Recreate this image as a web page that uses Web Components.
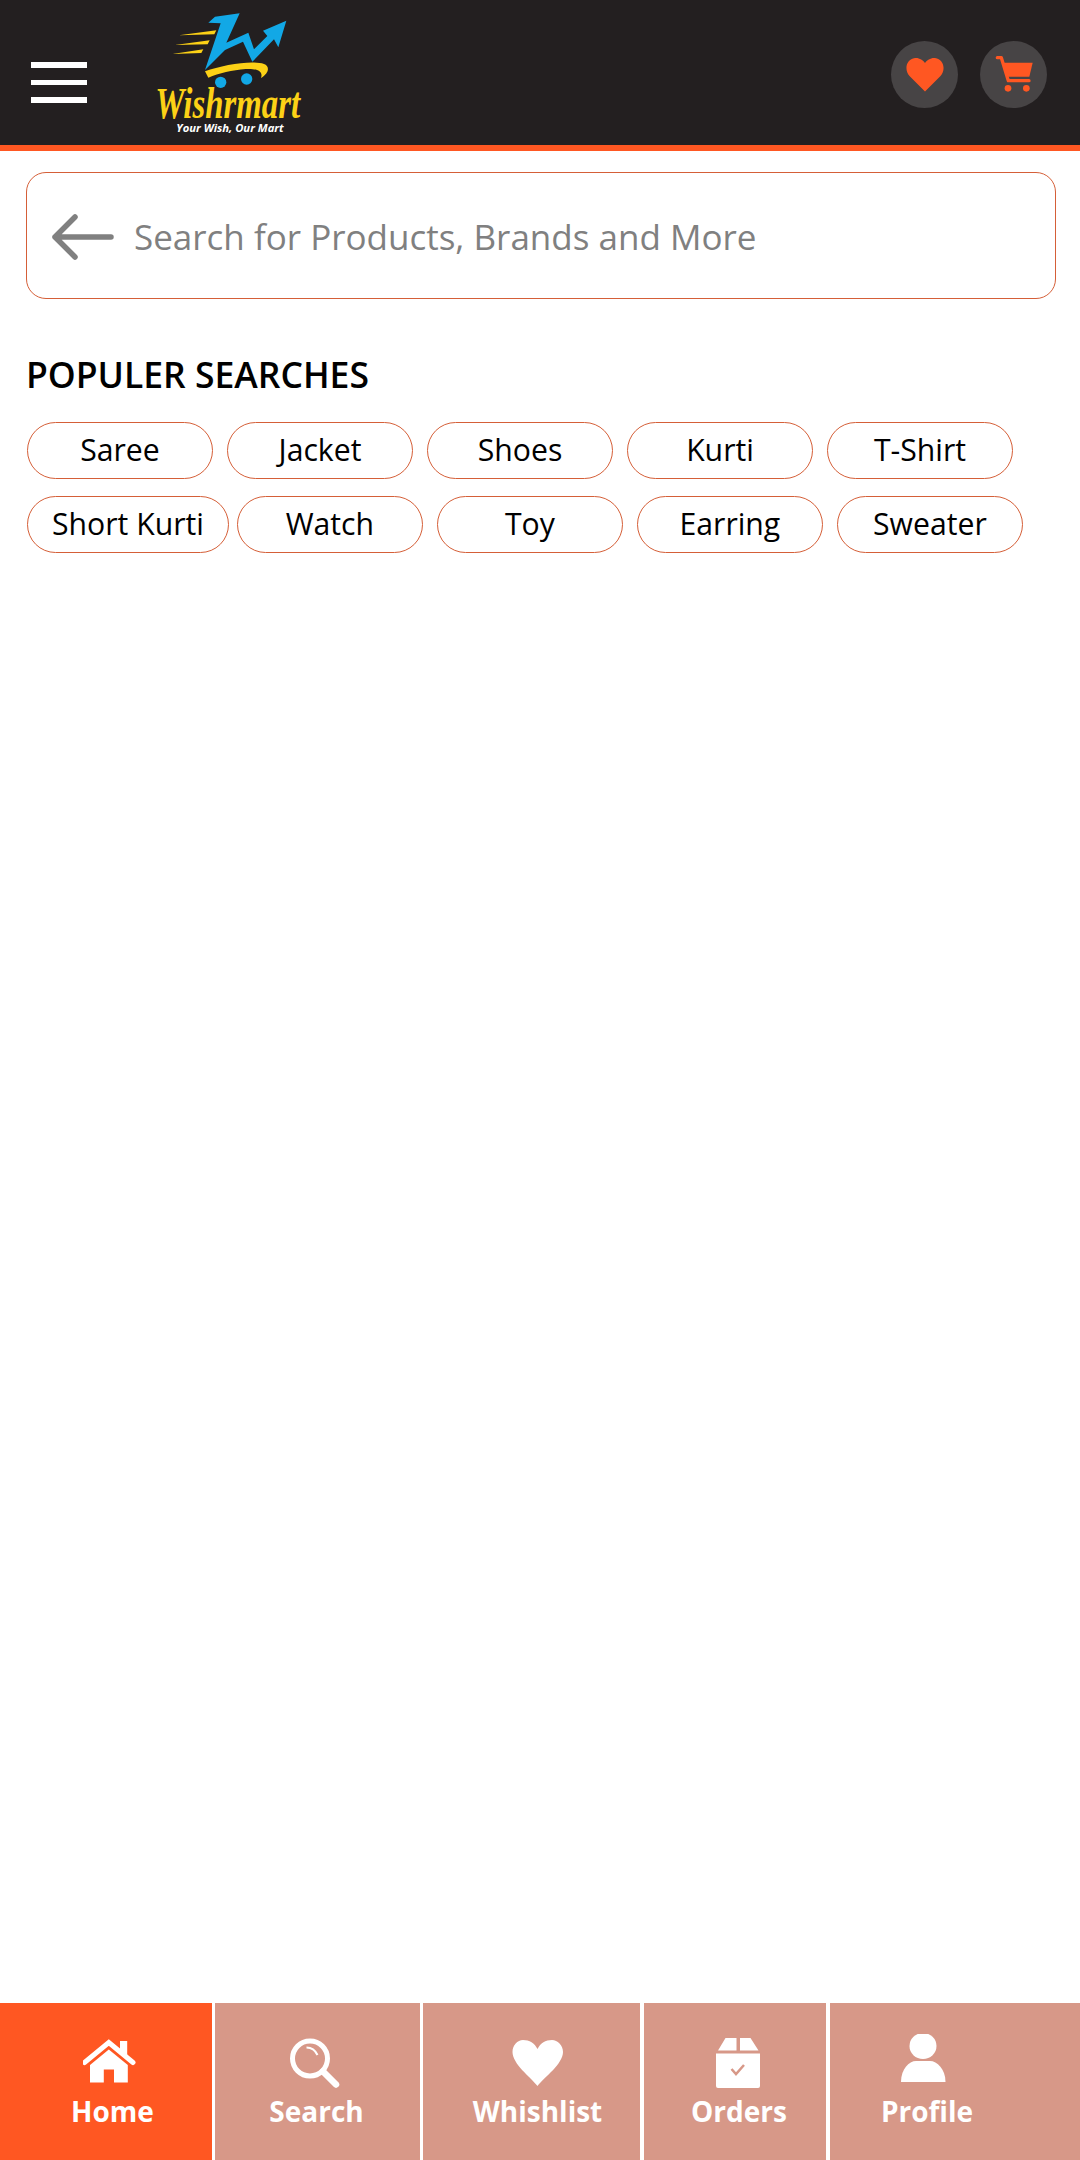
<!DOCTYPE html>
<html lang="en"><head><meta charset="utf-8"><title>Wishrmart</title>
<style>
html,body{margin:0;padding:0;background:#fff}
body{width:1080px;height:2160px;font-family:"Open Sans",sans-serif;display:flex;flex-direction:column;overflow:hidden}
</style></head><body>
<app-header></app-header>
<search-box placeholder="Search for Products, Brands and More"></search-box>
<popular-searches heading="POPULER SEARCHES">
  <search-chip>Saree</search-chip><search-chip>Jacket</search-chip><search-chip>Shoes</search-chip><search-chip>Kurti</search-chip><search-chip>T-Shirt</search-chip>
  <search-chip tight>Short Kurti</search-chip><search-chip>Watch</search-chip><search-chip>Toy</search-chip><search-chip>Earring</search-chip><search-chip>Sweater</search-chip>
</popular-searches>
<bottom-nav>
  <nav-item active label="Home" w="212" pad="42.5"><svg xmlns="http://www.w3.org/2000/svg" slot="icon" viewBox="82.5 2034 60 56" width="60" height="56"><path d="M84 2062.500L108.300 2042.500L132.500 2062.500" fill="none" stroke="#fff" stroke-width="5" stroke-linecap="round"/><path d="M119.500 2041H126.700V2057L119.500 2051Z" fill="#fff"/><path d="M89.500 2065L108.300 2049.500L127.300 2065V2082.500H113.500V2069.500H103.300V2082.500H89.500Z" fill="#fff"/></svg></nav-item>
  <nav-item label="Search" w="205" pad="31.5"><svg xmlns="http://www.w3.org/2000/svg" slot="icon" viewBox="286.5 2034 60 56" width="60" height="56"><circle cx="309.500" cy="2058.500" r="17.500" fill="none" stroke="#fff" stroke-width="5"/><path d="M322.500 2071.500L335.500 2084.500" stroke="#fff" stroke-width="6.500" stroke-linecap="round"/><path d="M306 2047.500Q313.500 2047.500 317 2055" fill="none" stroke="#fff" stroke-width="2"/></svg></nav-item>
  <nav-item label="Whishlist" w="217" pad="44.5"><svg xmlns="http://www.w3.org/2000/svg" slot="icon" viewBox="507.5 2034 60 56" width="60" height="56"><path d="M537 2086C530 2077 512 2064 512 2052C512 2045 517 2040 522.500 2040C529 2040 534 2043 537 2049C540 2043 545 2040 551.500 2040C557 2040 562.500 2045 562.500 2052C562.500 2064 544 2077 537 2086Z" fill="#fff"/></svg></nav-item>
  <nav-item label="Orders" w="182" pad="25" wide><svg xmlns="http://www.w3.org/2000/svg" slot="icon" viewBox="709 2034 60 56" width="60" height="56"><path d="M718 2050.500L725.500 2038H736.500V2050.500ZM740 2038H750.500L758.500 2050.500H740ZM716 2053.500H760V2086Q760 2088 758 2088H718Q716 2088 716 2086Z" fill="#fff"/><path d="M731.500 2069L736 2074L744 2065" fill="none" stroke="#d79888" stroke-width="2.500"/></svg></nav-item>
  <nav-item label="Profile" w="250" pad="27" wide><svg xmlns="http://www.w3.org/2000/svg" slot="icon" viewBox="897 2034 60 56" width="60" height="56"><ellipse cx="923" cy="2046" rx="13.500" ry="13"/><path d="M901 2082C901 2069 909 2061 916 2061H930C937 2061 945.500 2069 945.500 2082Z"/></svg></nav-item>
</bottom-nav>
<script>
const mk=(name,cls)=>customElements.define(name,cls);
const shadow=(el,html)=>{el.attachShadow({mode:'open'}).innerHTML=html};
mk('app-logo',class extends HTMLElement{connectedCallback(){shadow(this,`<style>:host{display:block;width:180px;height:145px;flex:none}svg{display:block}</style>
<svg viewBox="0 0 540 435" width="180" height="145" xmlns="http://www.w3.org/2000/svg">
<path d="M208 68L228 50L302 40L262 128L328 98L345 148L385 108L372 92L442 62L418 142L405 118L340 185L312 125L258 150L198 210L245 70Z" fill="#12a8e6"/>
<path d="M198 214C250 195 340 180 375 192C392 198 392 218 366 234C374 212 350 205 320 207C280 210 240 220 208 233Z" fill="#fcd116"/>
<circle cx="245" cy="247" r="17" fill="#12a8e6"/><circle cx="323" cy="237" r="17" fill="#12a8e6"/>
<path d="M120 106L232 91L226 103ZM108 135L212 121L206 133ZM100 162L193 148L187 159Z" fill="#fcd116"/>
<text transform="translate(49 353) scale(.725 1)" font-family="'Liberation Serif',serif" font-weight="700" font-style="italic" font-size="136" fill="#fcd116">Wishrmart</text>
<text x="112" y="397" font-family="'Open Sans',sans-serif" font-weight="700" font-style="italic" font-size="29" fill="#fff" textLength="322" lengthAdjust="spacingAndGlyphs">Your Wish, Our Mart</text>
</svg>`)}});
mk('round-button',class extends HTMLElement{connectedCallback(){shadow(this,`<style>:host{display:flex;width:67px;height:67px;border-radius:50%;background:#474445;align-items:center;justify-content:center;flex:none}</style><slot></slot>`)}});
mk('app-header',class extends HTMLElement{connectedCallback(){shadow(this,`<style>
:host{display:flex;align-items:center;height:145px;background:#231f20;border-bottom:6px solid #ff5722;flex:none;padding:0 33px 0 31px}
.menu{display:flex;flex-direction:column;gap:12px;width:56px;margin-right:52px;align-self:flex-start;margin-top:62px}
.menu i{display:block;height:5.500px;background:#fff}
.sp{flex:1}
.acts{display:flex;gap:22px;margin-top:3px}
svg{display:block}
</style>
<div class="menu"><i></i><i></i><i></i></div>
<app-logo></app-logo><div class="sp"></div>
<div class="acts">
<round-button><svg xmlns="http://www.w3.org/2000/svg" width="38" height="35" viewBox="0 0 38 35"><path d="M19 34.500L3.500 19C-2 13 0 2 9 1C13 .5 17 3 19 6C21 3 25 .5 29 1C38 2 40 13 34.500 19Z" fill="#ff5722"/></svg></round-button>
<round-button><svg xmlns="http://www.w3.org/2000/svg" width="40" height="40" viewBox="460 165 120 120"><path d="M470 176H482L503 245H565" fill="none" stroke="#ff5722" stroke-width="10" stroke-linecap="round" stroke-linejoin="round"/><path d="M484 191H576L566 233H497Z" fill="#ff5722"/><circle cx="502" cy="268" r="10" fill="#ff5722"/><circle cx="557" cy="268" r="10" fill="#ff5722"/></svg></round-button>
</div>`)}});
mk('search-box',class extends HTMLElement{connectedCallback(){shadow(this,`<style>
:host{display:block;flex:none;padding:21px 24px 0 26px}
.box{display:flex;align-items:center;height:127px;box-sizing:border-box;border:1px solid #d55f38;border-radius:20px;padding:2px 0 0 24px;gap:20px}
svg{display:block;flex:none}
span{font-size:35px;color:#808080;font-family:"Open Sans",sans-serif;white-space:nowrap}
</style><div class="box"><svg xmlns="http://www.w3.org/2000/svg" width="63" height="46" viewBox="0 0 63 46"><path d="M60 23H4M24 3L4 23L24 43" fill="none" stroke="#808080" stroke-width="5.500" stroke-linecap="round" stroke-linejoin="round"/></svg><span>${this.getAttribute('placeholder')}</span></div>`)}});
mk('popular-searches',class extends HTMLElement{connectedCallback(){shadow(this,`<style>
:host{display:block;flex:1;padding:53px 0 0 27px}
h2{margin:0 0 25px -1px;font:550 35.500px/45px "Open Sans",sans-serif;color:#000}
.chips{display:flex;flex-wrap:wrap;gap:17px 14px;width:1020px}
</style><h2>${this.getAttribute('heading')}</h2><div class="chips"><slot></slot></div>`)}});
mk('search-chip',class extends HTMLElement{connectedCallback(){shadow(this,`<style>
:host{display:flex;align-items:center;justify-content:center;box-sizing:border-box;min-width:186px;height:57px;padding:0 24px 2px;border:1px solid #d55f38;border-radius:29px;font:400 30.200px "Open Sans",sans-serif;color:#000;white-space:nowrap}
:host([tight]){margin-right:-6px}
</style><slot></slot>`)}});
mk('bottom-nav',class extends HTMLElement{connectedCallback(){shadow(this,`<style>
:host{display:flex;gap:3px;height:157px;flex:none;background:#fff}
</style><slot></slot>`)}});
mk('nav-item',class extends HTMLElement{connectedCallback(){
const w=this.getAttribute('w');
shadow(this,`<style>
:host{display:flex;flex-direction:column;align-items:flex-start;box-sizing:border-box;width:${w}px;flex:${w==250?'1':'none'};background:#d79888;color:#fff;padding-top:31px;padding-left:${this.getAttribute('pad')}px}
:host([active]){background:#ff5722}
:host([wide]){margin-left:1px}
.inner{display:flex;flex-direction:column;align-items:center;width:140px}
::slotted(svg){display:block;fill:#fff}
span{font:700 28px/34px "Open Sans",sans-serif;margin-top:4px;white-space:nowrap}
</style><div class="inner"><slot name="icon"></slot><span>${this.getAttribute('label')}</span></div>`)}});
</script>
</body></html>
